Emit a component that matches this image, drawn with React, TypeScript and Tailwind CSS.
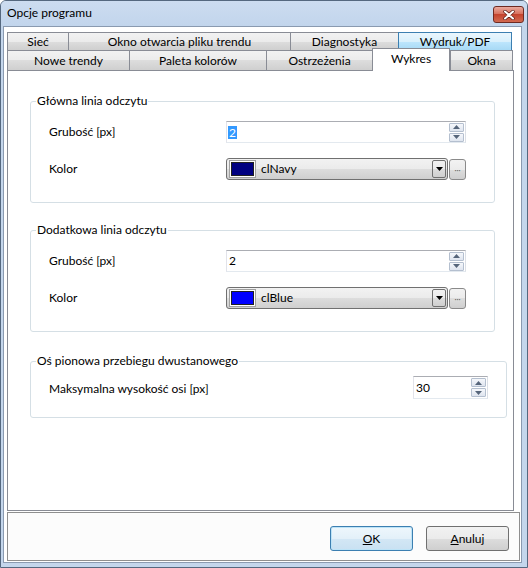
import React from "react";

const btnGrad = "bg-[linear-gradient(#f2f2f2,#ebebeb_50%,#dddddd_50%,#cfcfcf)]";

const SpinBtn = ({ up }: { up?: boolean }) => (
  <div className="w-[15px] h-[9px] border border-[#b4bfcf] rounded-[1px] bg-[linear-gradient(#f5f7fb,#dfe5ef)] flex items-center justify-center">
    <svg width="7" height="4" viewBox="0 0 7 4">
      {up ? <path d="M0 4 L3.5 0 L7 4 Z" fill="#56657a" /> : <path d="M0 0 L3.5 4 L7 0 Z" fill="#56657a" />}
    </svg>
  </div>
);

const SpinEdit = ({ value, selected, className }: { value: string; selected?: boolean; className: string }) => (
  <div className={`flex border border-[#abadb3] border-l-[#e2e3ea] border-r-[#dbdfe6] border-b-[#e3e9ef] bg-white ${className}`}>
    <div className="flex-1 flex items-center pl-[1px]">
      <span className={selected ? "bg-[#3399ff] text-white px-[1px] leading-[13px]" : "px-[1px]"}>{value}</span>
    </div>
    <div className="flex flex-col justify-center gap-[1px] pr-[1px]">
      <SpinBtn up />
      <SpinBtn />
    </div>
  </div>
);

const ColorCombo = ({ color, name }: { color: string; name: string }) => (
  <div className="flex items-center gap-[1px]">
    <div className={`w-[222px] h-[22px] rounded-[3px] border border-[#707070] ${btnGrad} flex items-center pl-[2px] pr-[1px]`}>
      <div className="w-[27px] h-[18px] border border-[#a0a0a0] p-[1px] bg-white">
        <div className="w-full h-full border border-[#202020]" style={{ background: color }} />
      </div>
      <span className="ml-[5px] flex-1">{name}</span>
      <div className={`w-[14px] h-[18px] rounded-[2px] border border-[#707070] ${btnGrad} flex items-center justify-center`}>
        <svg width="7" height="4" viewBox="0 0 7 4">
          <path d="M0 0 L3.5 4 L7 0 Z" fill="#000" />
        </svg>
      </div>
    </div>
    <div className={`w-[17px] h-[21px] rounded-[3px] border border-[#8a8a8a] ${btnGrad} flex items-end justify-center pb-[5px]`}>
      <span className="text-[8px] leading-[8px] text-[#606060]">···</span>
    </div>
  </div>
);

const Tab = ({ label, w, hot, last }: { label: string; w: string; hot?: boolean; last?: boolean }) => (
  <div
    className={`${w} h-full flex items-center justify-center border-t border-l ${last ? "border-r" : ""} ${
      hot
        ? "border-[#3c7fb1] bg-[linear-gradient(#eaf6fd,#d9f0fc_50%,#bee6fd_50%,#a7d9f5)]"
        : `border-[#898c95] ${btnGrad}`
    }`}
  >
    {label}
  </div>
);

const Row = ({ label, children }: { label: string; children: React.ReactNode }) => (
  <div className="flex items-center pl-[18px]">
    <span className="w-[177px]">{label}</span>
    {children}
  </div>
);

export default function App() {
  return (
    <div className="w-[528px] h-[568px] bg-[#c4d6ec] border border-[#55687f] rounded-t-[6px] flex flex-col text-[12px] text-black font-['Lato',sans-serif] overflow-hidden">
      {/* pasek tytułu */}
      <div className="h-[25px] flex items-start justify-between pl-[6px] pr-[3px] bg-[linear-gradient(#ccdcf0,#c2d5ec)]">
        <span className="mt-[4px] leading-[16px]">Opcje programu</span>
        <div className="mt-[5px] w-[31px] h-[17px] rounded-[3px] border border-[#6e2a22] bg-[linear-gradient(#eaaa9f,#d8725f_45%,#c4432e_50%,#d26a50)] flex items-center justify-center">
          <svg width="12" height="10" viewBox="0 0 12 10">
            <path d="M2 1.5 L10 8.5 M10 1.5 L2 8.5" stroke="#5a1f18" strokeWidth="3.4" strokeLinecap="round" />
            <path d="M2 1.5 L10 8.5 M10 1.5 L2 8.5" stroke="#fff" strokeWidth="2" strokeLinecap="round" />
          </svg>
        </div>
      </div>

      {/* obszar klienta */}
      <div className="h-[537px] ml-[2px] mr-[5px] mb-[4px] border border-[#8a9ab0] bg-white flex flex-col pt-[5px] pb-[1px]">
        <div className="ml-[3px] w-[507px]">
          <div className="flex h-[18px]">
            <Tab label="Sieć" w="w-[61px]" />
            <Tab label="Okno otwarcia pliku trendu" w="w-[222px]" />
            <Tab label="Diagnostyka" w="w-[108px]" />
            <Tab label="Wydruk/PDF" w="w-[114px]" hot last />
          </div>
          <div className="flex items-end h-[22px] -mt-[2px]">
            <div className="h-[20px] flex">
              <Tab label="Nowe trendy" w="w-[122px]" />
              <Tab label="Paleta kolorów" w="w-[137px]" />
              <Tab label="Ostrzeżenia" w="w-[106px]" />
            </div>
            <div className="relative z-10 w-[78px] h-[23px] -mb-[1px] bg-white border border-b-0 border-[#898c95] flex items-start justify-center pt-[1px]">
              Wykres
            </div>
            <div className="h-[20px] flex">
              <Tab label="Okna" w="w-[63px]" last />
            </div>
          </div>
        </div>

        {/* strona zakładki */}
        <div className="ml-[3px] w-[507px] h-[441px] border border-[#898c95] bg-white">
          <fieldset className="ml-[22px] mt-[22px] w-[465px] border border-[#d5dfe5] rounded-[3px] pt-[12px] pb-[22px] flex flex-col gap-[15px]">
            <legend className="ml-[5px] px-[1px] leading-[16px]">Główna linia odczytu</legend>
            <Row label="Grubość [px]">
              <SpinEdit value="2" selected className="w-[240px] h-[22px]" />
            </Row>
            <Row label="Kolor">
              <ColorCombo color="#000080" name="clNavy" />
            </Row>
          </fieldset>

          <fieldset className="ml-[22px] mt-[19px] w-[465px] border border-[#d5dfe5] rounded-[3px] pt-[12px] pb-[22px] flex flex-col gap-[15px]">
            <legend className="ml-[5px] px-[1px] leading-[16px]">Dodatkowa linia odczytu</legend>
            <Row label="Grubość [px]">
              <SpinEdit value="2" className="w-[240px] h-[22px]" />
            </Row>
            <Row label="Kolor">
              <ColorCombo color="#0000ff" name="clBlue" />
            </Row>
          </fieldset>

          <fieldset className="ml-[22px] mt-[21px] w-[477px] border border-[#d5dfe5] rounded-[3px] pt-[7px] pb-[18px]">
            <legend className="ml-[5px] px-[1px] leading-[16px]">Oś pionowa przebiegu dwustanowego</legend>
            <div className="flex items-center justify-between px-[18px]">
              <span className="mt-[2px]">Maksymalna wysokość osi [px]</span>
              <SpinEdit value="30" className="w-[75px] h-[23px]" />
            </div>
          </fieldset>
        </div>

        {/* przyciski */}
        <div className="mt-[1px] ml-[3px] mr-[1px] h-[49px] border border-[#8f8f8f] bg-[#fcfcfc] flex justify-end items-start gap-[13px] pt-[13px] pr-[10px]">
          <button className="w-[83px] h-[25px] rounded-[3px] border border-[#3c7fb1] bg-[linear-gradient(#eef7fc,#e3f0f9_50%,#d3e7f5_50%,#c9e1f2)] shadow-[inset_0_0_0_1px_#bde3f7]">
            <span className="underline">O</span>K
          </button>
          <button className={`w-[83px] h-[25px] rounded-[3px] border border-[#707070] ${btnGrad}`}>
            <span className="underline">A</span>nuluj
          </button>
        </div>
      </div>
    </div>
  );
}
